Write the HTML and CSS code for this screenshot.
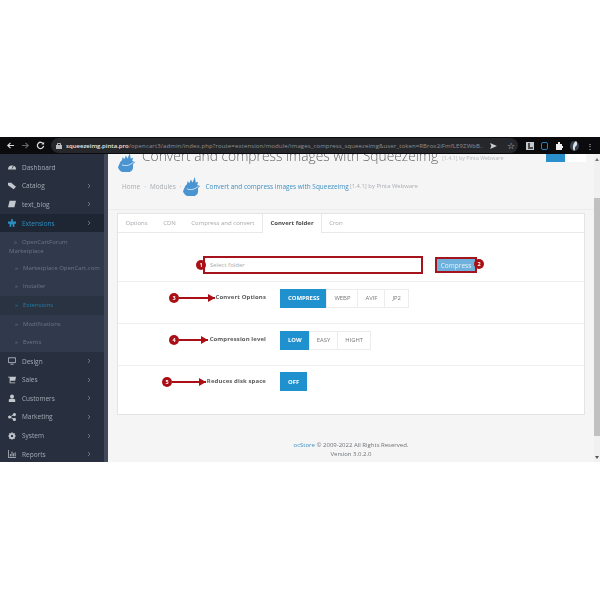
FILE: index.html
```html
<!DOCTYPE html>
<html lang="en">
<head>
    <meta charset="UTF-8">
    <title>Convert and compress images with Squeezeimg</title>
    <link rel="stylesheet" href="styles.css">
</head>
<body>
    <svg class="defs" width="0" height="0">
        <symbol id="chev" viewBox="0 0 6 8"><path d="M1.5 1l3 3-3 3" fill="none" stroke="currentColor" stroke-width="1.2"/></symbol>
        <symbol id="logo" viewBox="0 0 24 24"><path d="M3 11l2-2 1-4 2 3 2-5 2 4 3-7 1 7 3-1-1 4 4 1-3 3v5c-1 5-6 6-9 6-5 0-9-3-10-7z" fill="#4a94d2"/><path d="M5 15c5 2 11 1 17-6" fill="none" stroke="#fff" stroke-width="0.9"/></symbol>
    </svg>
    <div class="shot">
        <header class="toolbar">
            <div class="nav-icons">
                <svg width="9" height="9" viewBox="0 0 10 10"><path d="M9 5H2M5 2L2 5l3 3" fill="none" stroke="#ddd" stroke-width="1.3"/></svg>
                <svg width="9" height="9" viewBox="0 0 10 10"><path d="M1 5h7M5 2l3 3-3 3" fill="none" stroke="#666" stroke-width="1.3"/></svg>
                <svg width="9" height="9" viewBox="0 0 10 10"><path d="M8 3a3.5 3.5 0 1 0 .5 2.500" fill="none" stroke="#ddd" stroke-width="1.4"/><path d="M9 1v3H6z" fill="#ddd"/></svg>
            </div>
            <div class="omnibox">
                <svg width="6" height="7" viewBox="0 0 6 7"><rect y="3" width="6" height="4" fill="#bbb"/><path d="M1.500 3V1.500h3V3" fill="none" stroke="#bbb"/></svg>
                <span class="url"><b>squeezeimg.pinta.pro</b>/opencart3/admin/index.php?route=extension/module/images_compress_squeezeimg&amp;user_token=RBrox2iFmfLE9ZWbB...</span>
                <svg class="push" width="7" height="6" viewBox="0 0 8 7"><path d="M0 0l8 3.500L0 7l1.500-3.500z" fill="#ccc"/></svg>
                <span class="star">☆</span>
            </div>
            <div class="ext-icons">
                <svg width="8" height="8" viewBox="0 0 8 8"><path d="M0 0h8v8H0z" fill="#c4c8cc"/><path d="M2 1h2v4h3v2H2z" fill="#4a4d52"/></svg>
                <i class="ext ext-blue"></i>
                <svg width="8" height="8" viewBox="0 0 8 8"><path d="M1 2h2V0h2v2h2v2h1v2H7v2H1z" fill="#eee"/></svg>
                <svg width="9" height="10" viewBox="0 0 9 10"><ellipse cx="4.500" cy="5" rx="4.500" ry="5" fill="#39414e"/><path d="M4 10C2 7 3 2 6 0c2 2 1 5-1 6 0 2 0 3-1 4z" fill="#dfe3ea"/></svg>
                <span class="dots">⋮</span>
            </div>
        </header>
        <div class="window">
            <nav class="sidebar">
                <a class="nav-item"><svg class="nav-icon" viewBox="0 0 10 10"><path d="M0 8a5 5 0 1 1 10 0z" fill="currentColor"/><path d="M5 7l2-4" stroke="#28303f"/></svg>Dashboard</a>
                <a class="nav-item"><svg class="nav-icon" viewBox="0 0 10 10"><path d="M0 1h4l6 5-3 3-7-5z" fill="currentColor"/></svg>Catalog<svg class="chev"><use href="#chev"/></svg></a>
                <a class="nav-item"><svg class="nav-icon" viewBox="0 0 10 10"><path d="M2 1h8L8 9H0z" fill="currentColor"/></svg>text_blog<svg class="chev"><use href="#chev"/></svg></a>
                <a class="nav-item active"><svg class="nav-icon" viewBox="0 0 10 10"><path d="M4 0h2v3h4v3H8v4H6V7H4v3H2V6H0V3h4z" fill="currentColor"/></svg>Extensions<svg class="chev"><use href="#chev"/></svg></a>
                <div class="submenu">
                    <a class="sub-item tall"><span class="sub-mark">»</span>OpenCartForum Marketplace</a>
                    <a class="sub-item"><span class="sub-mark">»</span>Marketplace OpenCart.com</a>
                    <a class="sub-item"><span class="sub-mark">»</span>Installer</a>
                    <a class="sub-item active"><span class="sub-mark">»</span>Extensions</a>
                    <a class="sub-item"><span class="sub-mark">»</span>Modifications</a>
                    <a class="sub-item"><span class="sub-mark">»</span>Events</a>
                </div>
                <a class="nav-item"><svg class="nav-icon" viewBox="0 0 10 10"><path d="M.5 1h9v6h-9zM3 9h4" fill="none" stroke="currentColor"/></svg>Design<svg class="chev"><use href="#chev"/></svg></a>
                <a class="nav-item"><svg class="nav-icon" viewBox="0 0 10 10"><path d="M0 1h10L9 6H3v2h6v1H2V2H0z" fill="currentColor"/></svg>Sales<svg class="chev"><use href="#chev"/></svg></a>
                <a class="nav-item"><svg class="nav-icon" viewBox="0 0 10 10"><circle cx="5" cy="3" r="2.500" fill="currentColor"/><path d="M1 10V7l2-1h4l2 1v3z" fill="currentColor"/></svg>Customers<svg class="chev"><use href="#chev"/></svg></a>
                <a class="nav-item"><svg class="nav-icon" viewBox="0 0 10 10"><circle cx="2" cy="5" r="2" fill="currentColor"/><circle cx="8" cy="2" r="2" fill="currentColor"/><circle cx="8" cy="8" r="2" fill="currentColor"/><path d="M8 2L2 5l6 3" fill="none" stroke="currentColor"/></svg>Marketing<svg class="chev"><use href="#chev"/></svg></a>
                <a class="nav-item"><svg class="nav-icon" viewBox="0 0 10 10"><circle cx="5" cy="5" r="2.700" fill="none" stroke="currentColor" stroke-width="2.400"/><path d="M5 0v10M0 5h10M1.500 1.500l7 7M8.500 1.500l-7 7" stroke="currentColor" stroke-dasharray="1.500 7"/></svg>System<svg class="chev"><use href="#chev"/></svg></a>
                <a class="nav-item"><svg class="nav-icon" viewBox="0 0 10 10"><path d="M.5 0v9.500H10M3 8V5M5 8V2M7 8V4M9 8V3" fill="none" stroke="currentColor"/></svg>Reports<svg class="chev"><use href="#chev"/></svg></a>
            </nav>
            <div class="sidebar-bar"></div>
            <main class="content">
                <div class="page-head">
                    <div class="title-row">
                        <svg class="title-logo"><use href="#logo"/></svg>
                        <h1>Convert and compress images with Squeezeimg</h1>
                        <small>[1.4.1] by Pinta Webware</small>
                        <div class="head-btns"><i class="head-btn blue"></i><i class="head-btn"></i></div>
                    </div>
                    <div class="crumbs">
                        <span>Home</span><span class="sep">·</span><span>Modules</span><span class="sep">·</span>
                        <svg class="crumb-logo"><use href="#logo"/></svg>
                        <a>Convert and compress images with Squeezeimg</a>
                        <span class="ver">[1.4.1] by Pinta Webware</span>
                    </div>
                </div>
                <section class="panel">
                    <div class="tabs">
                        <span class="tab">Options</span>
                        <span class="tab">CDN</span>
                        <span class="tab">Compress and convert</span>
                        <span class="tab current">Convert folder</span>
                        <span class="tab">Cron</span>
                    </div>
                    <div class="row row-folder">
                        <div class="folder-input">Select folder<span class="badge badge-input">1</span></div>
                        <button class="compress">Compress<span class="badge badge-btn">2</span></button>
                    </div>
                    <div class="row row-opt">
                        <label class="row-label">Convert Options
                            <span class="callout callout-3"><span class="badge">3</span><span class="arrow"></span></span>
                        </label>
                        <div class="group">
                            <span class="opt on">COMPRESS</span><span class="opt">WEBP</span><span class="opt">AVIF</span><span class="opt">JP2</span>
                        </div>
                    </div>
                    <div class="row row-opt">
                        <label class="row-label">Compression level
                            <span class="callout callout-4"><span class="badge">4</span><span class="arrow"></span></span>
                        </label>
                        <div class="group">
                            <span class="opt on">LOW</span><span class="opt">EASY</span><span class="opt">HIGHT</span>
                        </div>
                    </div>
                    <div class="row row-opt row-last">
                        <label class="row-label">Reduces disk space
                            <span class="callout callout-5"><span class="badge">5</span><span class="arrow"></span></span>
                        </label>
                        <div class="group">
                            <span class="opt on">OFF</span>
                        </div>
                    </div>
                </section>
                <footer class="foot">
                    <a>ocStore</a> © 2009-2022 All Rights Reserved.<br>Version 3.0.2.0
                </footer>
            </main>
            <div class="scrollbar"><span class="scroll-up"></span><span class="scroll-thumb"></span><span class="scroll-down"></span></div>
        </div>
    </div>
</body>
</html>
```

FILE: styles.css
```css
body {
    margin: 0;
    background-color: #fff;
    font-family: "Open Sans", sans-serif;
}

.defs {
    display: block;
}

.shot {
    margin-top: 137px;
    height: 325px;
    display: flex;
    flex-direction: column;
    overflow: hidden;
    filter: blur(0.35px);
}

/* browser bar */
.toolbar {
    height: 17px;
    flex: none;
    background-color: #0b0b0d;
    display: flex;
    align-items: center;
    padding: 0 6px;
    box-sizing: border-box;
}

.nav-icons {
    display: flex;
    gap: 6px;
    margin-right: 6px;
}

.omnibox {
    flex: 1;
    height: 15px;
    background-color: #26272b;
    border-radius: 8px;
    display: flex;
    align-items: center;
    gap: 4px;
    padding: 0 3px 0 5px;
    min-width: 0;
}

.url {
    font-size: 6px;
    letter-spacing: 0.12px;
    color: #8d8f94;
    white-space: nowrap;
    overflow: hidden;
    flex: 1;
    min-width: 0;
}

.url b {
    color: #e8e8e8;
    font-weight: 600;
    letter-spacing: 0;
}

.push {
    margin-left: 3px;
}

.star {
    font-size: 9px;
    color: #ccc;
    margin-left: 6px;
    line-height: 1;
}

.ext-icons {
    display: flex;
    align-items: center;
    gap: 7px;
    margin-left: 8px;
}

.ext {
    width: 7px;
    height: 8px;
    display: block;
}

.ext-blue {
    border: 1.5px solid #2a7fc0;
    border-radius: 2px;
    box-sizing: border-box;
}

.dots {
    color: #ddd;
    font-size: 8px;
    line-height: 1;
}

.window {
    flex: 1;
    display: flex;
    min-height: 0;
}

/* left menu */
.sidebar {
    width: 104px;
    flex: none;
    background-color: #28303f;
    overflow: hidden;
    padding-top: 4px;
    box-sizing: border-box;
}

.sidebar-bar {
    width: 4px;
    flex: none;
    background-color: #414a59;
}

.nav-item {
    height: 18.6px;
    display: flex;
    align-items: center;
    padding: 0 6px 0 8px;
    font-size: 6.500px;
    color: #a3aab5;
}

.nav-item.active {
    background-color: #1f2633;
    color: #2a8fc4;
}

.nav-icon {
    width: 8px;
    height: 8px;
    margin-right: 6px;
    color: #c3c8cf;
    flex: none;
}

.nav-item.active .nav-icon {
    color: #2a8fc4;
}

.chev {
    width: 4px;
    height: 6px;
    margin-left: auto;
    margin-right: 7px;
    color: #7c8491;
}

.submenu {
    background-color: #303a4c;
}

.sub-item {
    display: block;
    font-size: 6px;
    line-height: 18.6px;
    padding: 0 2px 0 10px;
    color: #6d7686;
    white-space: nowrap;
}

.sub-item.tall {
    white-space: normal;
    line-height: 9px;
    padding: 5.500px 2px 3px 9px;
}

.sub-item.active {
    background-color: #2a3342;
    color: #1f7ea8;
}

.sub-mark {
    font-size: 6px;
    margin: 0 5px 0 5px;
}

/* page */
.content {
    flex: 1;
    min-width: 0;
    background-color: #f5f5f5;
    display: flex;
    flex-direction: column;
    padding: 0 9px;
}

.page-head {
    height: 56px;
    flex: none;
    margin: 0 -9px;
    padding: 0 9px;
    border-bottom: 1px solid #ececec;
    box-sizing: border-box;
    overflow: hidden;
}

.title-row {
    height: 12px;
    display: flex;
    align-items: flex-end;
    color: #6b6f76;
}

.title-logo {
    width: 19px;
    height: 19px;
    flex: none;
    margin: 0 5px -3px 1px;
    position: relative;
    top: 3px;
}

.title-row h1 {
    font-size: 13.800px;
    font-weight: 300;
    line-height: 20px;
    margin: 0 4px 0 0;
    white-space: nowrap;
    color: #666;
}

.title-row small {
    font-size: 5.300px;
    color: #b5b8bc;
    margin-bottom: 4px;
    white-space: nowrap;
}

.head-btns {
    margin-left: auto;
    display: flex;
    gap: 2px;
    align-self: flex-start;
    margin-right: -1px;
}

.head-btn {
    display: block;
    width: 19px;
    height: 8px;
    background-color: #fff;
}

.head-btn.blue {
    background-color: #2b8fcb;
}

.crumbs {
    display: flex;
    align-items: center;
    gap: 3px;
    margin: 10px 0 0 5px;
    height: 20px;
    font-size: 6.450px;
    color: #a7abb0;
    white-space: nowrap;
}

.sep {
    margin: 0 1px;
}

.crumb-logo {
    width: 19px;
    height: 19px;
    flex: none;
    margin: 0 0 0 -2px;
}

.crumbs a {
    color: #3f8fc4;
}

.ver {
    color: #a9adb2;
    font-size: 5.900px;
    margin-left: -2px;
}

.panel {
    flex: none;
    background-color: #fff;
    border: 1px solid #e4e4e4;
    height: 202px;
    box-sizing: border-box;
    margin-top: 3px;
    display: flex;
    flex-direction: column;
}

.tabs {
    height: 19px;
    flex: none;
    display: flex;
    border-bottom: 1px solid #e8e8e8;
    box-sizing: border-box;
    font-size: 6px;
    color: #a5a8ad;
}

.tab {
    padding: 0 8px 0 7.500px;
    line-height: 19px;
    white-space: nowrap;
}

.tab.current {
    background-color: #fff;
    color: #4a4a4a;
    font-weight: 700;
    border-left: 1px solid #e8e8e8;
    border-right: 1px solid #e8e8e8;
    height: 19px;
    padding: 0 7px;
}

.row {
    border-bottom: 1px solid #efefef;
    display: flex;
    align-items: center;
    box-sizing: border-box;
}

.row-folder {
    height: 49px;
    padding: 15px 0 0 85px;
}

.folder-input {
    position: relative;
    width: 220px;
    height: 18px;
    border: 2px solid #a5131c;
    box-sizing: border-box;
    font-size: 6px;
    line-height: 15px;
    padding-left: 5px;
    color: #aaa;
    background-color: #fff;
}

.compress {
    position: relative;
    margin-left: 12px;
    width: 42px;
    height: 16px;
    padding: 0;
    border: 2px solid #a5131c;
    box-sizing: border-box;
    background-color: #6eb1dc;
    color: #e6f1f8;
    font: 6.500px "Open Sans", sans-serif;
    margin-top: 1px;
}

.badge {
    width: 10px;
    height: 10px;
    border-radius: 50%;
    background-color: #a90f15;
    color: #fff;
    font-size: 5.500px;
    font-weight: 700;
    line-height: 10px;
    text-align: center;
    display: block;
    flex: none;
}

.badge-input {
    position: absolute;
    left: -9px;
    top: 2px;
}

.badge-btn {
    position: absolute;
    right: -9px;
    top: 0;
}

.row-opt {
    height: 42px;
    padding: 0 0 9px 0;
    gap: 14px;
}

.row-last {
    height: 48px;
    border-bottom: none;
    align-items: flex-start;
    padding-top: 6px;
}

.row-label {
    width: 148px;
    position: relative;
    text-align: right;
    font-size: 6px;
    font-weight: 700;
    color: #595959;
    white-space: nowrap;
    letter-spacing: 0.1px;
    margin-top: -2px;
}

.row-last .row-label {
    margin-top: 5px;
}

.group {
    display: flex;
    height: 19px;
}

.opt {
    display: flex;
    align-items: center;
    padding: 0 7px;
    border: 1px solid #ececec;
    margin-left: -1px;
    font-size: 5.900px;
    color: #777;
    background-color: #fff;
    box-sizing: border-box;
}

.opt.on {
    background-color: #1f91cf;
    border-color: #1f91cf;
    color: #fff;
    font-weight: 700;
    margin-left: 0;
}

/* red annotations on top of the screenshot */
.callout {
    position: absolute;
    top: 0;
    display: flex;
    align-items: center;
}

.callout-3 {
    left: 51px;
    width: 46px;
}

.callout-4 {
    left: 51px;
    width: 39px;
}

.callout-5 {
    left: 44px;
    width: 44px;
}

.arrow {
    flex: 1;
    height: 2px;
    background-color: #a90f15;
    position: relative;
}

.arrow::after {
    content: "";
    position: absolute;
    right: 0;
    top: -3px;
    border-left: 7px solid #a90f15;
    border-top: 4px solid transparent;
    border-bottom: 4px solid transparent;
}

.foot {
    margin-top: 26px;
    text-align: center;
    font-size: 6px;
    line-height: 8.500px;
    color: #6e7277;
}

.foot a {
    color: #3f8fc4;
}

.scrollbar {
    width: 6px;
    flex: none;
    background-color: #f1f1f1;
    position: relative;
}

.scroll-up {
    position: absolute;
    top: 4px;
    left: 1px;
    border-left: 2px solid transparent;
    border-right: 2px solid transparent;
    border-bottom: 3px solid #777;
}

.scroll-thumb {
    position: absolute;
    top: 44px;
    bottom: 26px;
    left: 0;
    right: 0;
    background-color: #c1c1c1;
}

.scroll-down {
    position: absolute;
    bottom: 3px;
    left: 1px;
    border-left: 2px solid transparent;
    border-right: 2px solid transparent;
    border-top: 3px solid #555;
}
```
